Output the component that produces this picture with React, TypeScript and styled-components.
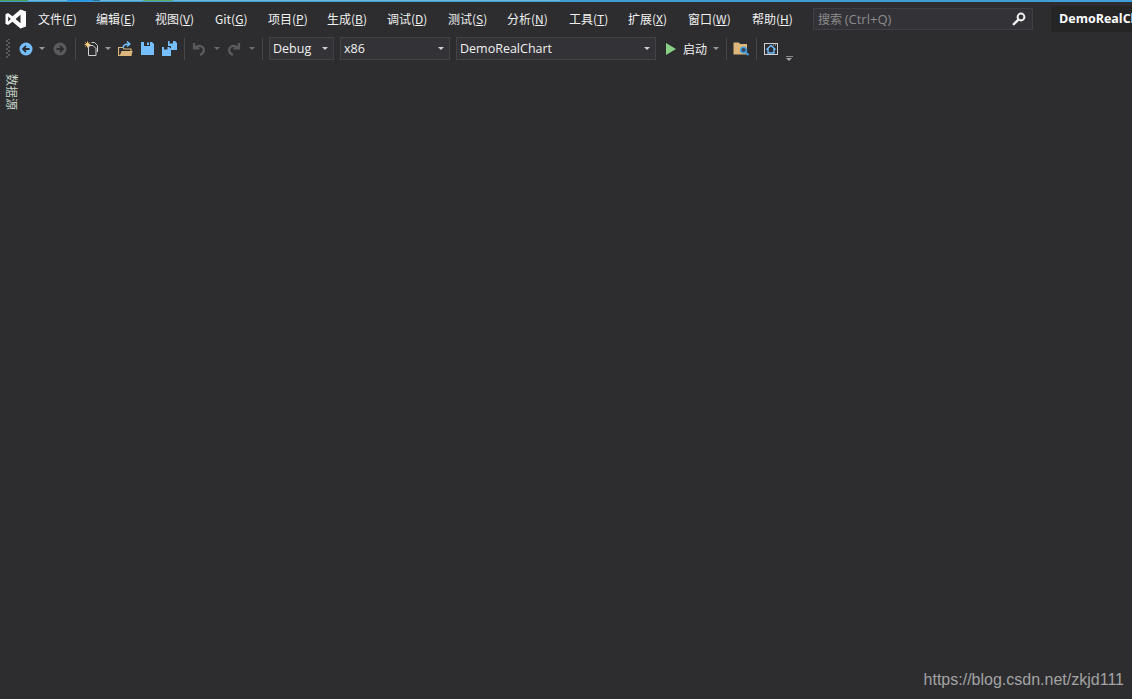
import { FunctionComponent, ReactNode } from "react";
import styled, { createGlobalStyle } from "styled-components";

const UI_FONT = `"Noto Sans CJK SC", "Open Sans", sans-serif`;

const GlobalStyle = createGlobalStyle`
  html, body {
    margin: 0;
    padding: 0;
    background: #2d2d30;
    overflow: hidden;
  }
`;

const Page = styled.div`
  position: relative;
  width: 1132px;
  height: 699px;
  display: flex;
  flex-direction: column;
  background: #2d2d30;
  color: #f1f1f1;
  font-family: ${UI_FONT};
  overflow: hidden;
`;

const TopStrip = styled.div`
  height: 2px;
  flex: none;
  background-color: #3f9fd6;
  background-image: linear-gradient(
    to right,
    #4a9f4c 0 28px,
    #6cb6dc 28px 67px,
    #1f97e6 67px 93px,
    #2c6f8f 93px 100px,
    #6cb6dc 100px 143px,
    #62a95a 143px 173px,
    #6cb6dc 173px 560px,
    #3f9fd6 560px 1132px
  );
  background-size: 100% 1px;
  background-repeat: no-repeat;
`;

const MenuBar = styled.div`
  height: 34px;
  flex: none;
  display: flex;
  align-items: center;
`;

const LogoSlot = styled.div`
  width: 38px;
  display: flex;
  justify-content: center;
  padding-right: 7px;
  box-sizing: border-box;
`;

const MenuItem = styled.div<{ $w: number }>`
  width: ${(p) => p.$w}px;
  flex: none;
  font-size: 12px;
  line-height: 16px;
  white-space: nowrap;
  color: #f1f1f1;

  u {
    text-underline-offset: 1px;
  }
`;

const SearchBox = styled.div`
  width: 220px;
  height: 22px;
  margin-left: 1px;
  margin-top: -1px;
  flex: none;
  display: flex;
  align-items: center;
  justify-content: space-between;
  box-sizing: border-box;
  padding: 0 6px 0 4px;
  background: #333337;
  border: 1px solid #3f3f46;
  font-size: 12px;
  color: #8c8c8c;
`;

const SearchHint = styled.span`
  font-family: "Open Sans", "Noto Sans", sans-serif;
  font-size: 13px;
`;

const TitleTag = styled.div`
  width: 81px;
  height: 26px;
  margin-left: 18px;
  margin-top: -1px;
  flex: none;
  box-sizing: border-box;
  padding-left: 8px;
  background: #252526;
  font-family: "Open Sans", "Noto Sans", sans-serif;
  font-weight: 700;
  font-size: 12.5px;
  line-height: 25px;
  color: #ffffff;
  white-space: nowrap;
  overflow: hidden;
`;

const ToolBar = styled.div`
  height: 25px;
  flex: none;
  display: flex;
  align-items: center;
  padding-left: 4px;
`;

const Slot = styled.div<{ $w: number; $gap?: number }>`
  width: ${(p) => p.$w}px;
  height: 22px;
  margin-left: ${(p) => p.$gap ?? 0}px;
  flex: none;
  display: flex;
  align-items: center;
  justify-content: center;
`;

const Grip = styled.div`
  width: 12px;
  height: 19px;
  flex: none;
  background-image: radial-gradient(#58585c 0.7px, transparent 0.9px),
    radial-gradient(#58585c 0.7px, transparent 0.9px);
  background-size: 4px 4px;
  background-position: 1px 0, 3px 2px;
  background-repeat: repeat-y;
`;

const Sep = styled.div<{ $w: number }>`
  width: ${(p) => p.$w}px;
  height: 22px;
  flex: none;
  display: flex;
  justify-content: center;

  &::before {
    content: "";
    width: 1px;
    background: #47474b;
  }
`;

const Caret = styled.span<{ $dim?: boolean; $w: number }>`
  width: ${(p) => p.$w}px;
  flex: none;
  display: flex;
  justify-content: center;

  &::before {
    content: "";
    border-top: 3px solid ${(p) => (p.$dim ? "#6d6d70" : "#999999")};
    border-left: 3px solid transparent;
    border-right: 3px solid transparent;
  }
`;

const Combo = styled.div<{ $w: number; $gap: number }>`
  width: ${(p) => p.$w}px;
  height: 23px;
  margin-left: ${(p) => p.$gap}px;
  flex: none;
  box-sizing: border-box;
  display: flex;
  align-items: center;
  justify-content: space-between;
  padding: 0 5px 0 3px;
  background: #333337;
  border: 1px solid #434346;
  font-family: "Open Sans", "Noto Sans", sans-serif;
  font-size: 12.5px;
  color: #f1f1f1;

  &::after {
    content: "";
    border-top: 3px solid #d0d0d0;
    border-left: 3px solid transparent;
    border-right: 3px solid transparent;
  }
`;

const RunLabel = styled.span`
  width: 24px;
  margin-left: 3px;
  flex: none;
  font-size: 12px;
  color: #f1f1f1;
`;

const Overflow = styled.div`
  width: 14px;
  height: 22px;
  flex: none;
  display: flex;
  flex-direction: column;
  align-items: center;
  justify-content: flex-end;
  gap: 1px;
  margin-top: 2px;
  box-sizing: border-box;

  &::before {
    content: "";
    width: 7px;
    height: 1px;
    background: #8c8c8c;
  }

  &::after {
    content: "";
    border-top: 3px solid #a8a8a8;
    border-left: 3px solid transparent;
    border-right: 3px solid transparent;
  }
`;

const Workspace = styled.div`
  flex: 1;
  display: flex;
  padding: 13px 0 0 6px;
`;

const SideTab = styled.div`
  writing-mode: vertical-rl;
  text-orientation: sideways;
  font-size: 12px;
  line-height: 13px;
  height: 36px;
  color: #c6d3c6;
`;

const Watermark = styled.div`
  position: absolute;
  right: 8px;
  bottom: 9px;
  font-family: "Liberation Sans", Arial, sans-serif;
  font-size: 16px;
  line-height: 20px;
  color: #a3a3a3;
`;

const VsLogo = () => (
  <svg width="22" height="20" viewBox="0 0 22 20">
    <path
      fill="#ffffff"
      d="M15.5 0.5 L21 2.5 V17.5 L15.5 19.5 L7.5 12.8 L3 16 L0.5 14.8 V5.2 L3 4 L7.5 7.2 Z M15.5 5.8 L10.6 10 L15.5 14.2 Z M3.2 7.5 V12.5 L5.8 10 Z"
      fillRule="evenodd"
    />
  </svg>
);

const SearchIcon = () => (
  <svg width="14" height="14" viewBox="0 0 14 14">
    <circle cx="9" cy="5" r="3.4" fill="none" stroke="#f1f1f1" strokeWidth="2" />
    <path d="M6.4 7.6 L1.8 12.2" stroke="#f1f1f1" strokeWidth="2.4" strokeLinecap="round" />
  </svg>
);

const CircleArrow: FunctionComponent<{ fill: string; stroke: string; flip?: boolean }> = (props) => (
  <svg width="14" height="14" viewBox="0 0 14 14">
    <circle cx="7" cy="7" r="6.5" fill={props.fill} />
    <path
      d={props.flip ? "M3.5 7 H9.5 M7 4 L10 7 L7 10" : "M10.5 7 H4.5 M7 4 L4 7 L7 10"}
      fill="none"
      stroke={props.stroke}
      strokeWidth="1.8"
    />
  </svg>
);

const NewProjectIcon = () => (
  <svg width="14" height="15" viewBox="0 0 14 15">
    <path d="M4.5 4.5 H9 L12 7.5 V14.5 H4.5 Z" fill="#2d2d30" stroke="#cfcfcf" strokeWidth="1" />
    <path d="M7.5 1.5 H10.5 L13.5 4.5 V11" fill="none" stroke="#cfcfcf" strokeWidth="1" />
    <path
      d="M3.5 0.5 V6.5 M0.5 3.5 H6.5 M1.4 1.4 L5.6 5.6 M5.6 1.4 L1.4 5.6"
      stroke="#f2c777"
      strokeWidth="1"
    />
  </svg>
);

const OpenIcon = () => (
  <svg width="15" height="15" viewBox="0 0 15 15">
    <path d="M0.5 6.5 H5 L6 8 H13 V14.5 H0.5 Z" fill="#2d2d30" stroke="#dcb67a" strokeWidth="1.2" />
    <path d="M2 14 L3.5 10 H14.8 L13 14.5 H2 Z" fill="#dcb67a" />
    <path d="M5 7 C5 4 7 3 11 3 M9 0.5 L11.8 3 L9 5.5" fill="none" stroke="#75beff" strokeWidth="1.5" />
  </svg>
);

const SaveIcon = () => (
  <svg width="13" height="13" viewBox="0 0 13 13">
    <path d="M0 0 H3 V4 H9 V0 H11 L13 2 V13 H0 Z" fill="#75beff" />
    <rect x="6" y="0.5" width="2" height="2.5" fill="#75beff" />
  </svg>
);

const SaveAllIcon = () => (
  <svg width="15" height="15" viewBox="0 0 15 15">
    <path d="M6 0 H7.5 V2.5 H11 V0 H13 L15 2 V9 H9 V5 H6 Z" fill="#75beff" />
    <path d="M0 6 H2 V8.5 H5.5 V6 H7 L9 7.5 V15 H0 Z" fill="#75beff" />
  </svg>
);

const UndoIcon: FunctionComponent<{ flip?: boolean }> = (props) => (
  <svg
    width="14"
    height="14"
    viewBox="0 0 14 14"
    style={props.flip ? { transform: "scaleX(-1)" } : undefined}
  >
    <path
      d="M2 1 V6.5 H7.5 M2.5 6 C5 3 10 3 11.5 6.5 C12.5 9 11 11.5 8 13"
      fill="none"
      stroke="#5a5a5d"
      strokeWidth="2.2"
    />
  </svg>
);

const PlayIcon = () => (
  <svg width="10" height="12" viewBox="0 0 10 12">
    <path d="M0 0 L10 6 L0 12 Z" fill="#89d185" />
  </svg>
);

const FindFolderIcon = () => (
  <svg width="16" height="14" viewBox="0 0 16 14">
    <path d="M0.5 0.5 H6 L7 2 H14 V12.5 H0.5 Z" fill="#dcb67a" />
    <circle cx="10.5" cy="8" r="2.8" fill="#3a4a5a" stroke="#3f9fe8" strokeWidth="1.4" />
    <path d="M12.5 10 L15.5 13" stroke="#3f9fe8" strokeWidth="1.9" />
  </svg>
);

const HomeWindowIcon = () => (
  <svg width="14" height="12" viewBox="0 0 14 12">
    <rect x="0.5" y="0.5" width="13" height="11" fill="none" stroke="#d0d0d0" />
    <rect x="9" y="1.5" width="1" height="1" fill="#d0d0d0" />
    <rect x="11" y="1.5" width="1" height="1" fill="#d0d0d0" />
    <path
      d="M2.5 6.5 L7 2.5 L11.5 6.5 M4 5.5 V10 H10 V5.5"
      fill="none"
      stroke="#75beff"
      strokeWidth="1.4"
    />
  </svg>
);

type MenuEntry = { label: string; key: string; w: number };

const menuEntries: MenuEntry[] = [
  { label: "文件", key: "F", w: 58 },
  { label: "编辑", key: "E", w: 59 },
  { label: "视图", key: "V", w: 60 },
  { label: "Git", key: "G", w: 53 },
  { label: "项目", key: "P", w: 59 },
  { label: "生成", key: "B", w: 60 },
  { label: "调试", key: "D", w: 61 },
  { label: "测试", key: "S", w: 59 },
  { label: "分析", key: "N", w: 62 },
  { label: "工具", key: "T", w: 59 },
  { label: "扩展", key: "X", w: 60 },
  { label: "窗口", key: "W", w: 64 },
  { label: "帮助", key: "H", w: 60 },
];

const IconSlot: FunctionComponent<{ w: number; children: ReactNode }> = (props) => (
  <Slot $w={props.w}>{props.children}</Slot>
);

export default function App() {
  return (
    <Page>
      <GlobalStyle />
      <TopStrip />
      <MenuBar>
        <LogoSlot>
          <VsLogo />
        </LogoSlot>
        {menuEntries.map((m) => (
          <MenuItem $w={m.w} key={m.key}>
            {m.label}(<u>{m.key}</u>)
          </MenuItem>
        ))}
        <SearchBox>
          <span>
            搜索 <SearchHint>(Ctrl+Q)</SearchHint>
          </span>
          <SearchIcon />
        </SearchBox>
        <TitleTag>DemoRealChart</TitleTag>
      </MenuBar>
      <ToolBar>
        <Grip />
        <IconSlot w={20}>
          <CircleArrow fill="#75beff" stroke="#2d2d30" />
        </IconSlot>
        <Caret $w={12} />
        <IconSlot w={24}>
          <CircleArrow fill="#5a5a5d" stroke="#2d2d30" flip />
        </IconSlot>
        <Sep $w={6} />
        <IconSlot w={26}>
          <NewProjectIcon />
        </IconSlot>
        <Caret $w={8} />
        <IconSlot w={26}>
          <OpenIcon />
        </IconSlot>
        <IconSlot w={18}>
          <SaveIcon />
        </IconSlot>
        <IconSlot w={26}>
          <SaveAllIcon />
        </IconSlot>
        <Sep $w={4} />
        <IconSlot w={26}>
          <UndoIcon />
        </IconSlot>
        <Caret $w={10} $dim />
        <IconSlot w={24}>
          <UndoIcon flip />
        </IconSlot>
        <Caret $w={12} $dim />
        <Sep $w={8} />
        <Combo $w={65} $gap={3}>Debug</Combo>
        <Combo $w={110} $gap={6}>x86</Combo>
        <Combo $w={200} $gap={6}>DemoRealChart</Combo>
        <Slot $w={18} $gap={6}>
          <PlayIcon />
        </Slot>
        <RunLabel>启动</RunLabel>
        <Slot $w={3} />
        <Caret $w={12} />
        <Sep $w={8} />
        <IconSlot w={22}>
          <FindFolderIcon />
        </IconSlot>
        <Sep $w={8} />
        <IconSlot w={22}>
          <HomeWindowIcon />
        </IconSlot>
        <Overflow />
      </ToolBar>
      <Workspace>
        <SideTab>数据源</SideTab>
      </Workspace>
      <Watermark>https://blog.csdn.net/zkjd111</Watermark>
    </Page>
  );
}
